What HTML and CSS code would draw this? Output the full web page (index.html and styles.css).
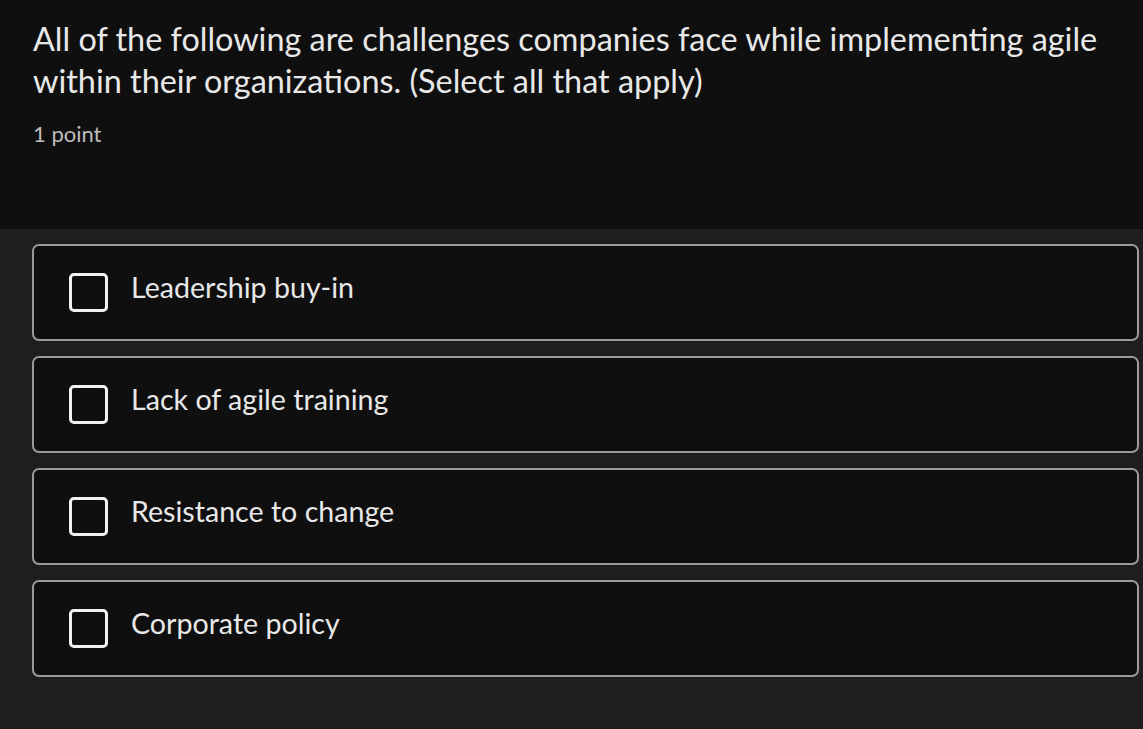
FILE: index.html
```html
<!DOCTYPE html>
<html lang="en">
<head>
<meta charset="utf-8">
<title>Quiz question</title>
<link rel="stylesheet" href="styles.css">
</head>
<body>
<div class="page">
  <header class="question">
    <h1 class="question-text">All of the following are challenges companies face while implementing agile within their organizations. (Select all that apply)</h1>
    <div class="points">1 point</div>
  </header>
  <section class="options">
    <label class="option"><span class="box"></span><span class="label">Leadership buy-in</span></label>
    <label class="option"><span class="box"></span><span class="label">Lack of agile training</span></label>
    <label class="option"><span class="box"></span><span class="label">Resistance to change</span></label>
    <label class="option"><span class="box"></span><span class="label">Corporate policy</span></label>
  </section>
</div>
</body>
</html>
```

FILE: styles.css
```css
* { box-sizing: border-box; }
html, body {
  margin: 0;
  padding: 0;
  background: #1e1e20;
  font-family: "Lato", "Open Sans", sans-serif;
  color: #e8e8e8;
}
.page {
  width: 1143px;
  min-height: 729px;
  display: flex;
  flex-direction: column;
}
.question {
  background: #0f0f0f;
  height: 229px;
  padding: 18px 30px 0 33px;
}
.question-text {
  margin: 0;
  font-weight: 400;
  font-size: 32.4px;
  line-height: 42px;
  color: #e8e8e8;
}
.points {
  margin-top: 18px;
  font-size: 22px;
  line-height: 28px;
  color: #bdbdbd;
}
.options {
  padding: 15px 4px 0 32px;
  display: flex;
  flex-direction: column;
  gap: 15px;
}
.option {
  height: 97px;
  border: 2px solid #9a9a9a;
  border-radius: 7px;
  background: #0f0f0f;
  display: flex;
  align-items: center;
  padding-left: 35px;
  gap: 23px;
}
.box {
  width: 39px;
  height: 39px;
  border: 3px solid #f2f2f2;
  border-radius: 5px;
  flex: none;
}
.label {
  font-size: 28.6px;
  line-height: 34px;
  padding-bottom: 11px;
  color: #e8e8e8;
}
```
